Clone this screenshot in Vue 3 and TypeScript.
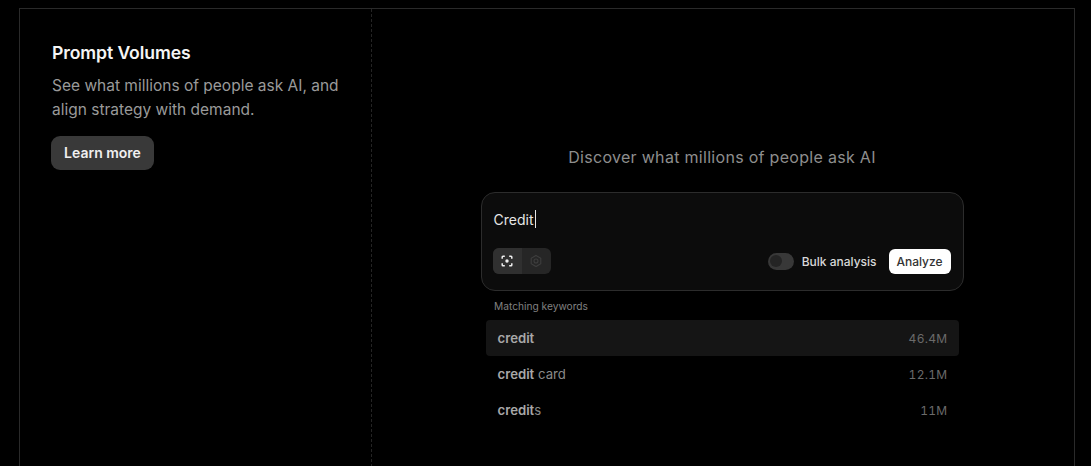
<script setup lang="ts">
interface Row { bold: string; rest: string; vol: string }
const rows: Row[] = [
  { bold: 'credit', rest: '', vol: '46.4M' },
  { bold: 'credit', rest: ' card', vol: '12.1M' },
  { bold: 'credit', rest: 's', vol: '11M' },
]
</script>

<template>
  <div class="page">
    <section class="frame">
      <aside class="side">
        <h2 class="title">Prompt Volumes</h2>
        <p class="desc">See what millions of people ask AI, and align strategy with demand.</p>
        <button class="learn">Learn more</button>
      </aside>
      <main class="demo">
        <h3 class="heading">Discover what millions of people ask AI</h3>
        <div class="box">
          <div class="input"><span>Credit</span><i class="caret"></i></div>
          <div class="controls">
            <div class="seg">
              <span class="seg-item on">
                <svg width="14" height="14" viewBox="0 0 14 14" fill="none" stroke="#f0f0f0" stroke-width="1.5">
                  <path d="M2.2 4.8V3q0-.8.8-.8h1.8M9.2 2.2H11q.8 0 .8.8v1.8M11.8 9.2V11q0 .8-.8.8H9.2M4.8 11.8H3q-.8 0-.8-.8V9.2" />
                  <circle cx="7" cy="7" r="1.7" fill="#f0f0f0" stroke="none" />
                </svg>
              </span>
              <span class="seg-item">
                <svg width="14" height="14" viewBox="0 0 14 14" fill="none" stroke="#3e3e3e" stroke-width="1.1">
                  <path d="M7 1.5l4.8 2.7v5.6L7 12.5 2.2 9.8V4.2z" />
                  <circle cx="7" cy="7" r="2" />
                </svg>
              </span>
            </div>
            <div class="right">
              <span class="switch"><i class="knob"></i></span>
              <span class="bulk">Bulk analysis</span>
              <button class="analyze">Analyze</button>
            </div>
          </div>
        </div>
        <div class="label">Matching keywords</div>
        <ul class="list">
          <li v-for="(r, i) in rows" :key="i" class="row" :class="{ active: i === 0 }">
            <span class="kw"><b>{{ r.bold }}</b>{{ r.rest }}</span>
            <span class="vol">{{ r.vol }}</span>
          </li>
        </ul>
      </main>
    </section>
  </div>
</template>

<style>
html, body { margin: 0; background: #000; }
</style>

<style scoped>
.page {
  width: 1091px;
  height: 466px;
  overflow: hidden;
  background: #000;
  padding: 8px 16px 0 19px;
  box-sizing: border-box;
  font-family: Inter, "Liberation Sans", sans-serif;
}
.frame {
  display: flex;
  height: 480px;
  box-sizing: border-box;
  border: 1px solid #2a2a2a;
}
.side {
  width: 352px;
  flex: none;
  box-sizing: border-box;
  padding: 33px 24px 0 32px;
  border-right: 1px dashed #242424;
}
.title {
  margin: 0;
  font-size: 17.6px;
  line-height: 22px;
  font-weight: 600;
  letter-spacing: -0.1px;
  color: #f5f5f5;
}
.desc {
  margin: 10px 0 0;
  font-size: 15.5px;
  line-height: 24px;
  color: #9a9a9a;
  width: 296px;
}
.learn {
  display: block;
  margin: 14px 0 0 -1px;
  width: 103px;
  height: 34px;
  padding: 0;
  border: 0;
  border-radius: 9px;
  background: #393939;
  color: #f0f0f0;
  font: 600 14px/34px Inter, "Liberation Sans", sans-serif;
}
.demo {
  flex: 1;
  min-width: 0;
  padding: 137px 2px 0 0;
  display: flex;
  flex-direction: column;
  align-items: center;
}
.heading {
  margin: 0;
  font-size: 16px;
  line-height: 22px;
  font-weight: 400;
  letter-spacing: 0.3px;
  color: #8e8e8e;
}
.box {
  margin-top: 24px;
  width: 483px;
  height: 99px;
  box-sizing: border-box;
  border: 1px solid #2c2c2c;
  border-radius: 14px;
  background: #0c0c0c;
  padding: 16px 12px 0 12px;
}
.input {
  display: flex;
  align-items: center;
  height: 20px;
  font-size: 14px;
  color: #e6e6e6;
}
.caret {
  display: block;
  width: 1px;
  height: 18px;
  margin-left: 2px;
  background: #e6e6e6;
}
.controls {
  margin-top: 19px;
  display: flex;
  align-items: center;
  justify-content: space-between;
}
.seg {
  display: flex;
  width: 58px;
  height: 26px;
  margin-left: -1px;
  border-radius: 6px;
  overflow: hidden;
  background: #262626;
}
.seg-item {
  flex: 1;
  display: flex;
  align-items: center;
  justify-content: center;
}
.seg-item.on { background: #303030; }
.right {
  display: flex;
  align-items: center;
}
.switch {
  width: 26px;
  height: 17px;
  border-radius: 9px;
  background: #383838;
  display: flex;
  align-items: center;
  padding-left: 2px;
  box-sizing: border-box;
}
.knob {
  display: block;
  width: 12px;
  height: 12px;
  border-radius: 50%;
  background: #242424;
}
.bulk {
  margin-left: 8px;
  font-size: 12px;
  font-weight: 500;
  color: #d8d8d8;
}
.analyze {
  margin-left: 12px;
  width: 62px;
  height: 25px;
  padding: 0;
  border: 0;
  border-radius: 6px;
  background: #fff;
  color: #333;
  font: 500 12px/25px Inter, "Liberation Sans", sans-serif;
}
.label {
  align-self: flex-start;
  margin: 8px 0 0 122px;
  font-size: 10.2px;
  line-height: 14px;
  color: #808080;
}
.list {
  list-style: none;
  margin: 7px 0 0;
  padding: 0;
  width: 473px;
}
.row {
  display: flex;
  justify-content: space-between;
  align-items: center;
  height: 36px;
  padding: 0 11px 0 12px;
  border-radius: 4px;
  font-size: 13.2px;
  color: #8a8a8a;
}
.row.active { background: #151515; }
.kw b {
  font-weight: 600;
  color: #a8a8a8;
}
.vol {
  font-size: 12px;
  letter-spacing: 0.3px;
  font-variant-numeric: tabular-nums;
  color: #6a6a6a;
}
</style>
